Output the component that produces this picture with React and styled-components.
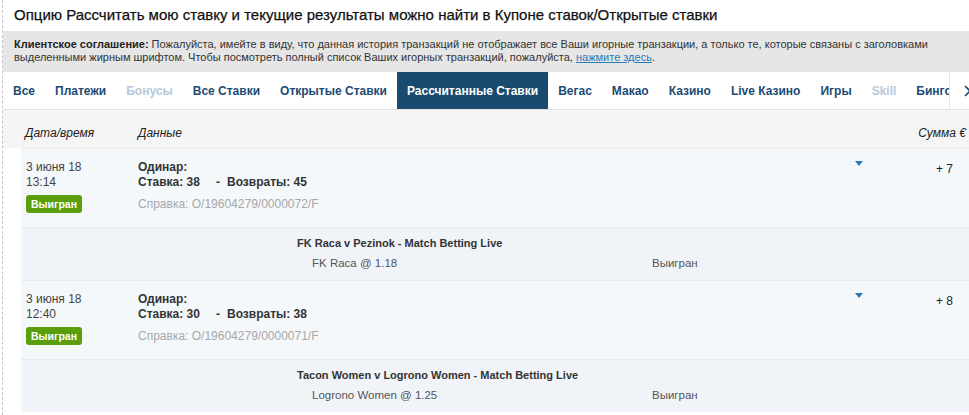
import React from 'react'
import styled, { createGlobalStyle } from 'styled-components'

const GlobalStyle = createGlobalStyle`
  body {
    margin: 0;
    background: #fff;
    font-family: "Liberation Sans", Arial, sans-serif;
    color: #333;
  }
`

const Page = styled.div`
  margin-left: 2px;
  border-left: 1px dashed #c4c4c4;
  height: 415px;
  overflow: hidden;
`

const Title = styled.h1`
  margin: 0;
  height: 31px;
  padding: 0 11px 2px;
  box-sizing: border-box;
  display: flex;
  align-items: center;
  font-size: 15px;
  font-weight: normal;
  color: #111;
  -webkit-text-stroke: 0.25px #111;
`

const Notice = styled.div`
  background: #e6e6e6;
  padding: 7px 11px 8px;
  font-size: 11px;
  line-height: 13px;
  color: #333;

  b { color: #222; }
  a { color: #2a7ab8; text-decoration: underline; }
`

const TabBar = styled.div`
  display: flex;
  height: 38px;
  box-sizing: border-box;
  border-bottom: 1px solid #e2e2e2;
  background: #fff;
  overflow: hidden;
`

const TabList = styled.div`
  width: 946px;
  flex-shrink: 0;
  display: flex;
  overflow: hidden;
  white-space: nowrap;
`

const Tab = styled.div`
  display: flex;
  align-items: center;
  padding: 0 10px;
  flex-shrink: 0;
  font-size: 12px;
  font-weight: bold;
  color: ${p => (p.$active ? '#fff' : p.$disabled ? '#b4c8da' : '#1c4b74')};
  background: ${p => (p.$active ? '#194a6f' : 'transparent')};
`

const ScrollButton = styled.div`
  width: 34px;
  flex-shrink: 0;
  box-sizing: border-box;
  border-left: 1px solid #e2e2e2;
  display: flex;
  align-items: center;
  padding-left: 14px;
`

const HeaderRow = styled.div`
  display: flex;
  align-items: center;
  height: 38px;
  padding-top: 8px;
  box-sizing: border-box;
  background: #f5f5f5;
  font-size: 12px;
  font-style: italic;
  color: #222;
`

const HeadCell = styled.div`
  box-sizing: border-box;
  width: ${p => p.$w || 'auto'};
  flex: ${p => (p.$grow ? 1 : 'none')};
  padding-left: ${p => p.$pl || '0'};
  padding-right: ${p => p.$pr || '0'};
`

const Bets = styled.div`
  margin-left: 18px;
`

const BetMain = styled.div`
  display: grid;
  grid-template-columns: 117px 1fr 56px 58px;
  height: 79px;
  box-sizing: border-box;
  padding-top: 11px;
  background: #f5f8fb;
  border-top: 1px solid #e8ebef;
  font-size: 12px;
`

const DateCol = styled.div`
  padding-left: 5px;
  line-height: 15px;
  color: #444;
`

const Badge = styled.span`
  display: inline-block;
  margin-top: 5px;
  height: 18px;
  line-height: 18px;
  padding: 0 5px;
  border-radius: 3px;
  background: #5b9e0b;
  color: #fff;
  font-weight: bold;
  font-size: 10.5px;
`

const DataCol = styled.div`
  line-height: 15px;
  color: #333;
`

const Strong = styled.div`
  font-weight: bold;
  color: #333;
`

const Dash = styled.span`
  margin: 0 7px 0 16px;
`

const Ref = styled.div`
  margin-top: 7px;
  color: #a7a7a7;
`

const Arrow = styled.div`
  padding-top: 1px;
  svg { display: block; }
`

const Amount = styled.div`
  text-align: right;
  padding-right: 16px;
  padding-top: 2px;
  color: #222;
`

const Detail = styled.div`
  height: 53px;
  box-sizing: border-box;
  padding: 8px 0 0 276px;
  background: #f0f4f9;
  border-top: 1px solid #e6e9ee;
  font-size: 11px;
`

const EventName = styled.div`
  font-weight: bold;
  color: #333;
  line-height: 14px;
`

const DetailLine = styled.div`
  display: grid;
  grid-template-columns: 355px 1fr;
  margin-top: 6px;
  font-size: 11.5px;
  color: #555;
  line-height: 14px;
`

const Selection = styled.div`
  padding-left: 15px;
`

const tabs = [
  { label: 'Все' },
  { label: 'Платежи' },
  { label: 'Бонусы', disabled: true },
  { label: 'Все Ставки' },
  { label: 'Открытые Ставки' },
  { label: 'Рассчитанные Ставки', active: true },
  { label: 'Вегас' },
  { label: 'Макао' },
  { label: 'Казино' },
  { label: 'Live Казино' },
  { label: 'Игры' },
  { label: 'Skill', disabled: true },
  { label: 'Бинго' },
  { label: 'Покер' },
]

const bets = [
  {
    date: '3 июня 18',
    time: '13:14',
    stake: '38',
    returns: '45',
    ref: 'O/19604279/0000072/F',
    amount: '+ 7',
    event: 'FK Raca v Pezinok - Match Betting Live',
    selection: 'FK Raca @ 1.18',
  },
  {
    date: '3 июня 18',
    time: '12:40',
    stake: '30',
    returns: '38',
    ref: 'O/19604279/0000071/F',
    amount: '+ 8',
    event: 'Tacon Women v Logrono Women - Match Betting Live',
    selection: 'Logrono Women @ 1.25',
  },
]

function Bet({ bet }) {
  return (
    <>
      <BetMain>
        <DateCol>
          {bet.date}
          <br />
          {bet.time}
          <br />
          <Badge>Выигран</Badge>
        </DateCol>
        <DataCol>
          <Strong>Одинар:</Strong>
          <Strong>
            Ставка: {bet.stake}
            <Dash>-</Dash>
            Возвраты: {bet.returns}
          </Strong>
          <Ref>Справка: {bet.ref}</Ref>
        </DataCol>
        <Arrow>
          <svg width="8" height="6" viewBox="0 0 8 6">
            <path d="M0 0 H8 L4 5 Z" fill="#2a7bb8" />
          </svg>
        </Arrow>
        <Amount>{bet.amount}</Amount>
      </BetMain>
      <Detail>
        <EventName>{bet.event}</EventName>
        <DetailLine>
          <Selection>{bet.selection}</Selection>
          <div>Выигран</div>
        </DetailLine>
      </Detail>
    </>
  )
}

export default function App() {
  return (
    <Page>
      <GlobalStyle />
      <Title>Опцию Рассчитать мою ставку и текущие результаты можно найти в Купоне ставок/Открытые ставки</Title>
      <Notice>
        <b>Клиентское соглашение:</b> Пожалуйста, имейте в виду, что данная история транзакций не отображает все Ваши игорные транзакции, а только те, которые связаны с заголовками выделенными жирным шрифтом. Чтобы посмотреть полный список Ваших игорных транзакций, пожалуйста, <a href="#">нажмите здесь</a>.
      </Notice>
      <TabBar>
        <TabList>
          {tabs.map(t => (
            <Tab key={t.label} $active={t.active} $disabled={t.disabled}>
              {t.label}
            </Tab>
          ))}
        </TabList>
        <ScrollButton>
          <svg width="8" height="12" viewBox="0 0 8 12">
            <path d="M1 1 L6 6 L1 11" fill="none" stroke="#1c4b74" strokeWidth="1.6" />
          </svg>
        </ScrollButton>
      </TabBar>
      <HeaderRow>
        <HeadCell $w="135px" $pl="22px">Дата/время</HeadCell>
        <HeadCell $grow>Данные</HeadCell>
        <HeadCell $pr="3px">Сумма €</HeadCell>
      </HeaderRow>
      <Bets>
        {bets.map(b => (
          <Bet key={b.ref} bet={b} />
        ))}
      </Bets>
    </Page>
  )
}
